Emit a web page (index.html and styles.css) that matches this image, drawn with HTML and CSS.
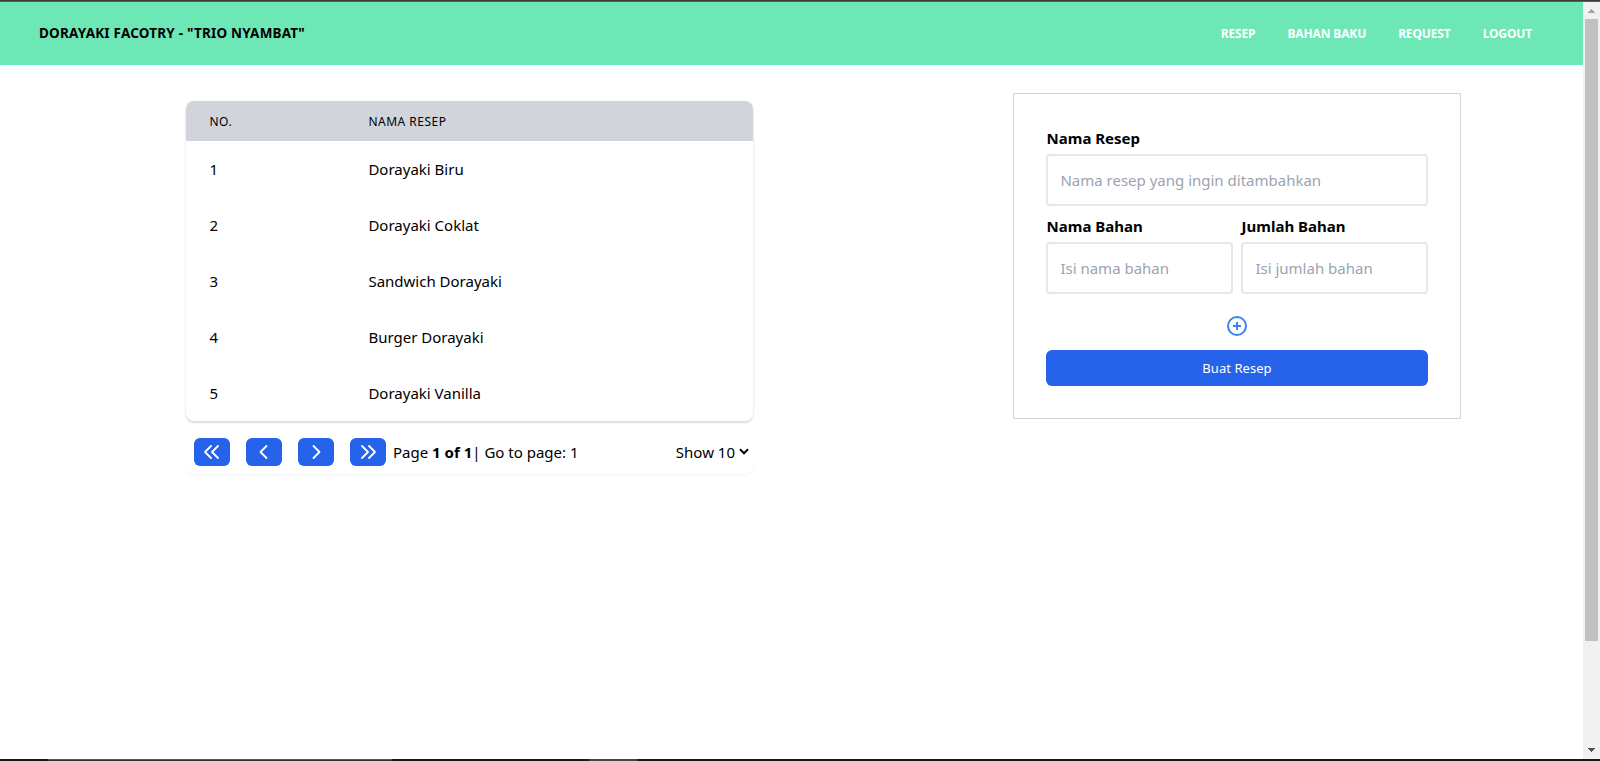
FILE: index.html
```
<!DOCTYPE html>
<html lang="id">
<head>
<meta charset="utf-8">
<title>Dorayaki Factory</title>
<link rel="stylesheet" href="styles.css">
</head>
<body>
<div class="window-top"></div>
<div class="viewport">
  <div class="page">
    <header class="navbar">
      <div class="brand"><span>DORAYAKI FACOTRY - "TRIO NYAMBAT"</span></div>
      <nav class="links">
        <a>RESEP</a><a>BAHAN BAKU</a><a>REQUEST</a><a>LOGOUT</a>
      </nav>
    </header>
    <main class="content">
      <section class="list">
        <div class="table">
          <div class="row head"><span>NO.</span><span>NAMA RESEP</span></div>
          <div class="row"><span>1</span><span>Dorayaki Biru</span></div>
          <div class="row"><span>2</span><span>Dorayaki Coklat</span></div>
          <div class="row"><span>3</span><span>Sandwich Dorayaki</span></div>
          <div class="row"><span>4</span><span>Burger Dorayaki</span></div>
          <div class="row"><span>5</span><span>Dorayaki Vanilla</span></div>
        </div>
        <div class="pager">
          <div class="buttons">
            <button class="pg"><svg viewBox="0 0 20 20"><path d="M9 4 3 10l6 6M16 4l-6 6 6 6"/></svg></button>
            <button class="pg"><svg viewBox="0 0 20 20"><path d="M12.5 4l-6 6 6 6"/></svg></button>
            <button class="pg"><svg viewBox="0 0 20 20"><path d="M7.5 4l6 6-6 6"/></svg></button>
            <button class="pg"><svg viewBox="0 0 20 20"><path d="M4 4l6 6-6 6M11 4l6 6-6 6"/></svg></button>
          </div>
          <div class="info">Page <b>1 of 1</b>| Go to page: 1</div>
          <div class="size">Show 10<svg viewBox="0 0 10 8"><path d="M1 1.3 5 5.3 9 1.3"/></svg></div>
        </div>
      </section>
      <form class="form">
        <label>Nama Resep</label>
        <input type="text" placeholder="Nama resep yang ingin ditambahkan">
        <div class="pair">
          <div><label>Nama Bahan</label><input type="text" placeholder="Isi nama bahan"></div>
          <div><label>Jumlah Bahan</label><input type="text" placeholder="Isi jumlah bahan"></div>
        </div>
        <svg class="add" viewBox="0 0 24 24"><circle cx="12" cy="12" r="9"/><path d="M12 8v8M8 12h8"/></svg>
        <button type="button" class="submit">Buat Resep</button>
      </form>
    </main>
  </div>
  <div class="scrollbar">
    <svg class="up" viewBox="0 0 7 4"><path d="M3 0h1v1h1v1h1v1h1v1H0V3h1V2h1V1h1z"/></svg>
    <div class="thumb"></div>
    <svg class="down" viewBox="0 0 7 4"><path d="M3 4h1V3h1V2h1V1h1V0H0v1h1v1h1v1h1z"/></svg>
  </div>
</div>
<div class="window-bottom"><i class="seg-a"></i><i class="seg-b"></i></div>
</body>
</html>
```
FILE: styles.css
```
* { box-sizing: border-box; }
body {
  margin: 0;
  height: 761px;
  display: flex;
  flex-direction: column;
  overflow: hidden;
  background: #fff;
  color: #000;
  font: 15px/24px "Noto Sans", "Open Sans", sans-serif;
  letter-spacing: 0;
}
.window-top { height: 2px; background: linear-gradient(#3c3a3c 50%, #5c5a5c 50%); }
.viewport { flex: 1; display: flex; min-height: 0; }
.page { flex: 1; }

.navbar {
  height: 63px;
  background: #6ee7b7;
  display: flex;
  align-items: center;
  justify-content: space-between;
  padding: 0 51px 0 39px;
}
.brand { font-size: 13.5px; font-weight: 700; letter-spacing: .21px; padding-bottom: 2px; }
.links { display: flex; gap: 32px; color: #fff; font-size: 12px; font-weight: 700; letter-spacing: -.13px; }

.content { display: flex; justify-content: space-between; padding: 28px 122px 0 186px; }
.list { width: 567px; padding-top: 8px; }
.table {
  border-radius: 8px;
  overflow: hidden;
  box-shadow: 0 1px 3px rgba(0,0,0,.1), 0 2px 2px rgba(0,0,0,.08);
}
.row { display: grid; grid-template-columns: 159px 1fr; height: 56px; align-items: center; padding: 0 23.4px; }
.head { height: 40px; padding-top: 2px; background: #d1d5db; font-size: 12px; letter-spacing: .5px; }
.pager {
  display: flex;
  align-items: center;
  height: 44px;
  margin-top: 9px;
  padding: 0 4px 0 8px;
  border-radius: 8px;
  box-shadow: 0 1px 2px rgba(0,0,0,.05);
}
.buttons { display: flex; gap: 16px; }
button { border: 0; padding: 0; background: #2563eb; color: #fff; border-radius: 6px; font-family: inherit; }
.pg { width: 36px; height: 28px; display: flex; align-items: center; justify-content: center; }
.pg svg { width: 20px; height: 20px; fill: none; stroke: #fff; stroke-width: 1.8; stroke-linecap: round; stroke-linejoin: round; }
.info { flex: 1; margin-left: 7px; white-space: nowrap; }
.size { display: flex; align-items: center; gap: 4px; white-space: nowrap; }
.size svg { width: 10px; height: 8px; fill: none; stroke: #000; stroke-width: 2; }

.form {
  width: 448px;
  height: 326px;
  padding: 32px;
  border: 1px solid #d1d5db;
  display: flex;
  flex-direction: column;
}
label { display: block; height: 28px; padding-left: .6px; font-weight: 700; white-space: nowrap; }
input {
  display: block;
  width: 100%;
  height: 52px;
  padding: 0 12.4px;
  border: 2px solid #e5e7eb;
  border-radius: 4px;
  background: #fff;
  font: inherit;
  letter-spacing: inherit;
}
input::placeholder { color: #9ca3af; opacity: 1; }
.pair { display: grid; grid-template-columns: 1fr 1fr; gap: 8px; margin-top: 8px; }
.add { width: 24px; height: 24px; margin: 20px auto 12px; fill: none; stroke: #3b82f6; stroke-width: 2; }
.submit { height: 36px; font-size: 13px; letter-spacing: .05px; }

.scrollbar { width: 17px; background: #f1f1f1; display: flex; flex-direction: column; align-items: center; }
.scrollbar svg { width: 7px; height: 4px; shape-rendering: crispEdges; }
.up { margin: 7px 0 6px; fill: #a3a3a3; }
.thumb { width: 13px; height: 622px; background: #c1c1c1; }
.down { margin-top: auto; margin-bottom: 7px; fill: #505050; }
.window-bottom { height: 2px; background: #191719; display: flex; }
.seg-a { width: 344px; margin-left: 48px; background: linear-gradient(#5a585a 50%, #333133 50%); }
.seg-b { width: 48px; margin-left: 197px; background: #484648; }
```
